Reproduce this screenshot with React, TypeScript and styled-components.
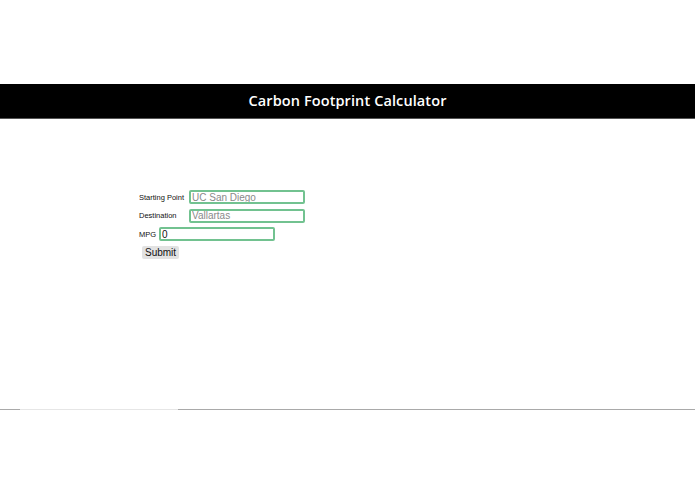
import styled, { createGlobalStyle } from "styled-components";
import { FC } from "react";

const Global = createGlobalStyle`
  html, body { margin: 0; padding: 0; background: #fff; }
  body { font-family: "Liberation Sans", Arial, sans-serif; }
`;

const App: FC = () => {
  return (
    <>
      <Global />
      <Page>
        <Header>
          <Title>Carbon Footprint Calculator</Title>
        </Header>
        <Form onSubmit={(e) => e.preventDefault()}>
          <Row>
            <Label width={50}>Starting Point</Label>
            <Field placeholder="UC San Diego" />
          </Row>
          <Row>
            <Label width={50}>Destination</Label>
            <Field placeholder="Vallartas" />
          </Row>
          <Row gap={3}>
            <Label>MPG</Label>
            <Field defaultValue="0" />
          </Row>
          <Submit type="submit">Submit</Submit>
        </Form>
        <Footer>
          <Faded />
        </Footer>
      </Page>
    </>
  );
};

export default App;

const Page = styled.div`
  width: 695px;
  height: 494px;
  padding-top: 84px;
  box-sizing: border-box;
`;

const Header = styled.header`
  height: 34px;
  background: #000;
  border-bottom: 1px solid #555;
  display: flex;
  align-items: center;
  justify-content: center;
`;

const Title = styled.h1`
  margin: 0 0 1px;
  color: #fff;
  font-family: "Open Sans", sans-serif;
  font-weight: 600;
  font-size: 14.5px;
  letter-spacing: 0.1px;
`;

const Form = styled.form`
  margin: 71px 0 0 139px;
  display: flex;
  flex-direction: column;
  align-items: flex-start;
  height: 219px;
`;

const Row = styled.div<{ gap?: number }>`
  display: flex;
  align-items: center;
  gap: ${(p) => p.gap ?? 0}px;
  margin-bottom: 4.5px;
`;

const Label = styled.label<{ width?: number }>`
  font-size: 7.5px;
  color: #111;
  ${(p) => (p.width ? `width: ${p.width}px;` : "")}
`;

const Field = styled.input`
  width: 116px;
  height: 14px;
  box-sizing: border-box;
  border: 2px solid #72c290;
  border-radius: 2px;
  padding: 0 1px;
  font-family: "Liberation Sans", Arial, sans-serif;
  font-size: 10px;
  color: #111;
  outline: none;
  &::placeholder { color: #8a8a8a; }
`;

const Submit = styled.button`
  margin-left: 3px;
  margin-top: 0;
  height: 13px;
  padding: 0 3px;
  border: none;
  border-radius: 2px;
  background: #e2e2e2;
  font-family: "Liberation Sans", Arial, sans-serif;
  font-size: 10px;
  color: #111;
  line-height: 13px;
`;

const Footer = styled.div`
  height: 1px;
  background: #a9a9a9;
  position: relative;
`;

const Faded = styled.div`
  position: absolute;
  left: 20px;
  width: 158px;
  top: 0;
  height: 1px;
  background: #e6e6e6;
`;
